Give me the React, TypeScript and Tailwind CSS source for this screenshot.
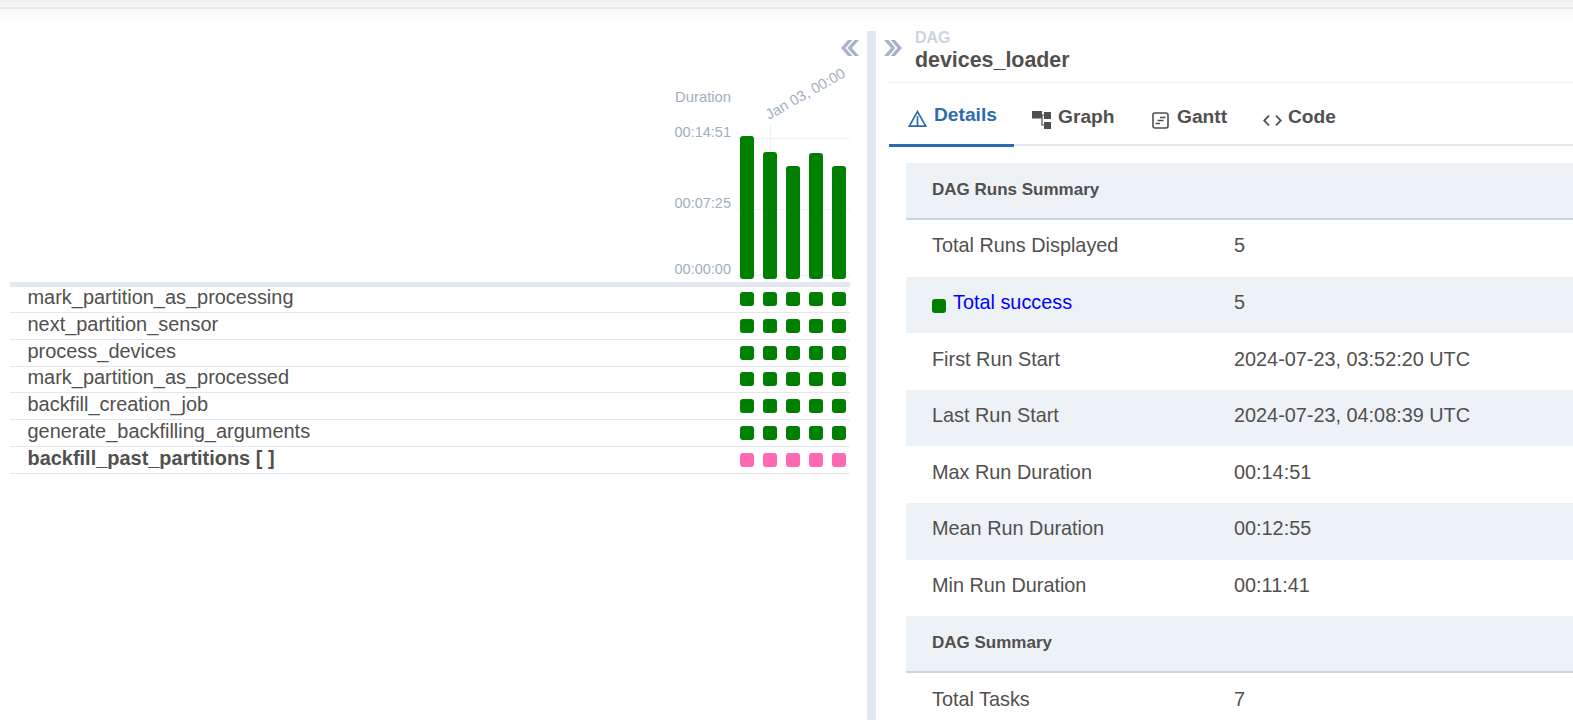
const greenBars = [136, 152, 166, 153, 166];
const tasks = [
  { name: "mark_partition_as_processing", h: "h-[26px] pt-[5px]" },
  { name: "next_partition_sensor", h: "h-[27px] pt-[6px]" },
  { name: "process_devices", h: "h-[27px] pt-[6px]" },
  { name: "mark_partition_as_processed", h: "h-[26px] pt-[5px]" },
  { name: "backfill_creation_job", h: "h-[27px] pt-[6px]" },
  { name: "generate_backfilling_arguments", h: "h-[27px] pt-[6px]" },
  { name: "backfill_past_partitions [ ]", h: "h-[27px] pt-[6px]", group: true },
];
const rows: { kind: string; a: string; b?: string; band?: boolean }[] = [
  { kind: "h", a: "DAG Runs Summary" },
  { kind: "r", a: "Total Runs Displayed", b: "5" },
  { kind: "s", a: "Total success", b: "5", band: true },
  { kind: "r", a: "First Run Start", b: "2024-07-23, 03:52:20 UTC" },
  { kind: "r", a: "Last Run Start", b: "2024-07-23, 04:08:39 UTC", band: true },
  { kind: "r", a: "Max Run Duration", b: "00:14:51" },
  { kind: "r", a: "Mean Run Duration", b: "00:12:55", band: true },
  { kind: "r", a: "Min Run Duration", b: "00:11:41" },
  { kind: "h", a: "DAG Summary" },
  { kind: "r", a: "Total Tasks", b: "7" },
];

function Chart() {
  return (
    <svg width="850" height="282" viewBox="0 0 850 282" className="block shrink-0" style={{ fontFamily: '"Liberation Sans", sans-serif' }}>
      <line x1="736" x2="850" y1="138.5" y2="138.5" stroke="#edf2f7" />
      <line x1="736" x2="850" y1="209.5" y2="209.5" stroke="#edf2f7" />
      <line x1="736" x2="850" y1="275.5" y2="275.5" stroke="#edf2f7" />
      <line x1="770.5" x2="770.5" y1="124" y2="152" stroke="#edf2f7" />
      <text x="731" y="102" textAnchor="end" fontSize="14.8" fill="#a0aec0">Duration</text>
      <text x="731" y="137" textAnchor="end" fontSize="14.5" fill="#a0aec0">00:14:51</text>
      <text x="731" y="208" textAnchor="end" fontSize="14.5" fill="#a0aec0">00:07:25</text>
      <text x="731" y="274" textAnchor="end" fontSize="14.5" fill="#a0aec0">00:00:00</text>
      <text x="769" y="120" fontSize="14.7" fill="#a0aec0" transform="rotate(-29.5 769 120)">Jan 03, 00:00</text>
      {greenBars.map((top, i) => (
        <rect key={i} x={740 + i * 23} y={top} width="14" height={279 - top} rx="3" fill="#008000" />
      ))}
    </svg>
  );
}

function Tab({ label, icon, active, w, gap }: { label: string; icon: React.ReactNode; active?: boolean; w: string; gap: string }) {
  return (
    <div className={`${w} ${gap} h-[64px] shrink-0 pl-[18px] pt-[7px] flex items-center ${active ? "border-b-[3px] border-[#2b6cb0] text-[#2b6cb0]" : ""}`}>
      {icon}
      <span className="-mt-[3px]">{label}</span>
    </div>
  );
}

export default function App() {
  return (
    <div className="w-[1573px] h-[720px] overflow-hidden bg-white text-[#51504f] flex flex-col font-['Liberation_Sans',sans-serif]">
      <div className="h-[7px] shrink-0 bg-gradient-to-b from-[#f0f0f0] to-[#f6f6f6]" />
      <div className="h-[2px] shrink-0 bg-[#e6e8ee]" />
      <div className="h-[16px] shrink-0 bg-gradient-to-b from-[#fafafa] to-white" />
      <div className="h-[6px] shrink-0" />
      <div className="flex flex-1 min-h-0">
        <section className="w-[867px] shrink-0 pl-[10px] pr-[17px] relative">
          <svg viewBox="0 0 18 16" className="absolute left-[841px] top-[9px] w-[18px] h-[16px] z-10" fill="#a9b5c6">
            <path d="M7 0 0 8l7 8h4.500L4.500 8l7-8zM13.500 0l-7 8 7 8H18l-7-8 7-8z" />
          </svg>
          <div className="-ml-[10px] -mt-[31px] h-[282px]"><Chart /></div>
          <div className="h-[5px] bg-[#e2e8f0]" />
          {tasks.map((t) => (
            <div key={t.name} className={`${t.h} border-b border-[#e2e8f0] flex items-start pl-[17.5px]`}>
              <span className={`text-[19.95px] leading-[24px] flex-1 -mt-[7px] ${t.group ? "font-bold" : ""}`}>{t.name}</span>
              <div className="flex gap-[9px] mr-[4px]">
                {[0, 1, 2, 3, 4].map((i) => (
                  <div key={i} className={`w-[14px] h-[14px] rounded-[3px] ${t.group ? "bg-[#ff69b4]" : "bg-[#008000]"}`} />
                ))}
              </div>
            </div>
          ))}
        </section>
        <div className="w-[9px] shrink-0 bg-[#e2e8f0]" />
        <section className="flex-1 min-w-0 pl-[13px] relative">
          <svg viewBox="0 0 18 16" className="absolute left-[8px] top-[9px] w-[18px] h-[16px]" fill="#a9b5c6">
            <path d="M0 0l7 8-7 8h4.500l7-8-7-8zM6.500 0l7 8-7 8H11l7-8-7-8z" />
          </svg>
          <div className="h-[53px] pl-[26px] border-b border-[#edf2f7] flex flex-col -mt-px">
            <div className="text-[16px] leading-[16px] text-[#cbd5e0] font-bold">DAG</div>
            <div className="text-[21.4px] leading-[26px] font-bold mt-px">devices_loader</div>
          </div>
          <div className="h-[63px] border-b-2 border-[#e2e8f0] flex text-[19.2px] font-bold">
            <Tab
              active
              w="w-[125px]"
              gap="gap-[7px]"
              label="Details"
              icon={
                <svg viewBox="0 0 19 17" className="w-[19px] h-[17px] mt-[3px] ml-[1px]" fill="none" stroke="#2b6cb0" strokeWidth="1.7">
                  <path d="M9.500 1.600 1.300 16.100h16.400zM9.500 6v10" />
                </svg>
              }
            />
            <Tab
              w="w-[118px]"
              gap="gap-[7px]"
              label="Graph"
              icon={
                <svg viewBox="0 0 19 18" className="w-[19px] h-[18px] mt-[3px]" fill="#51504f">
                  <path d="M0 0h10v7.500H0zM12 1h7v7h-7zM12 11h7v7h-7z" />
                  <path d="M10 4h2M10 4v10h2" stroke="#51504f" strokeWidth="1.2" fill="none" />
                </svg>
              }
            />
            <Tab
              w="w-[112px]"
              gap="gap-[8px]"
              label="Gantt"
              icon={
                <svg viewBox="0 0 17 17" className="w-[17px] h-[17px] mt-[3px] ml-[2px]" fill="none" stroke="#51504f" strokeWidth="1.6">
                  <rect x="1" y="1" width="15" height="15" rx="2" />
                  <path d="M8 5.500h5.500M5.500 8.500h6M3.500 11.500h4.500" />
                </svg>
              }
            />
            <Tab
              w="w-[120px]"
              gap="gap-[6px]"
              label="Code"
              icon={
                <svg viewBox="0 0 19 11" className="w-[19px] h-[11px] mt-[3px] ml-[1px]" fill="none" stroke="#51504f" strokeWidth="1.8">
                  <path d="M6 .7 1.200 5.500 6 10.300M13 .7l4.800 4.800L13 10.300" />
                </svg>
              }
            />
          </div>
          <div className="mt-[17px] ml-[17px] text-[19.85px]">
            {rows.map(({ kind, a, b, band }) =>
              kind === "h" ? (
                <div key={a} className="h-[57px] bg-[#edf2f7] border-b-2 border-[#cbd5e0] flex items-center pl-[26px] pb-[2px] text-[17px] font-bold">
                  {a}
                </div>
              ) : (
                <div key={a} className={`h-[56.6px] flex items-center pl-[26px] pb-[4px] ${band ? "bg-[#edf2f7]" : ""}`}>
                  <div className="w-[302px] flex items-center">
                    {kind === "s" && <span className="w-[14px] h-[14px] rounded-[3px] bg-[#008000] mr-[7px] mt-[6px] shrink-0" />}
                    <span className={kind === "s" ? "text-[#0000ff]" : ""}>{a}</span>
                  </div>
                  <div>{b}</div>
                </div>
              )
            )}
          </div>
        </section>
      </div>
    </div>
  );
}
